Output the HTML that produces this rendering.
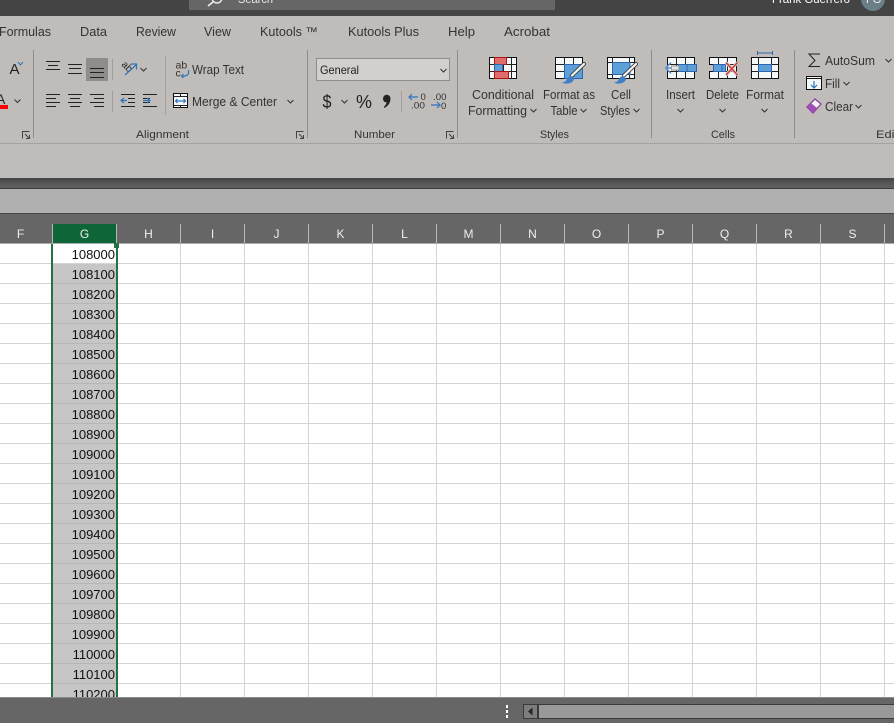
<!DOCTYPE html>
<html><head><meta charset="utf-8"><style>
html,body{margin:0;padding:0;width:894px;height:723px;overflow:hidden;background:#fff}
svg{display:block}
text{font-family:"Liberation Sans",sans-serif;font-size:12px;fill:#262626}
.n{font-size:13px;fill:#111;text-anchor:end}
.h{font-size:12px;fill:#eee;text-anchor:middle}
.g{fill:#333;font-size:11px}
.t{fill:#333;font-size:12.5px}
.l{stroke:#222;stroke-width:1;fill:none}
.b{stroke:#2e75c0;stroke-width:1.2;fill:none}
.k{fill:#f4f8f8;stroke:#111;stroke-width:1}
</style></head><body>
<svg width="894" height="723" viewBox="0 0 894 723" xmlns="http://www.w3.org/2000/svg">
<defs>
<path id="ch" d="M-3 -1.500L0 1.500L3 -1.500" fill="none" stroke="#333" stroke-width="1"/>
<path id="dl" d="M0 7V0H7M2.500 2.500L7 7M7 3.500V7H3.500" fill="none" stroke="#444" stroke-width="1"/>
<linearGradient id="sh" x1="0" y1="0" x2="0" y2="1"><stop offset="0" stop-color="#444"/><stop offset="0.5" stop-color="#565656"/><stop offset="1" stop-color="#606060"/></linearGradient>
<g id="brush">
<path d="M0 11.500L12 0" stroke="#444" stroke-width="4" stroke-linecap="round"/>
<path d="M0 11.500L12 0" stroke="#f6f6f6" stroke-width="2.200" stroke-linecap="round"/>
<path d="M-10 18.500Q-6 18 -5 15Q-3.500 12 -1 12L2 15Q1 19 -4 19.500Q-8 20 -10 18.500Z" fill="#3f7fc8"/>
</g>
</defs>
<!-- title bar -->
<rect x="0" y="0" width="894" height="16" fill="#444"/>
<rect x="189" y="0" width="366" height="10" fill="#666"/>
<circle cx="217" cy="-2" r="5" fill="none" stroke="#eee" stroke-width="1.400"/>
<path d="M213 2L208 6" stroke="#eee" stroke-width="1.600"/>
<text x="238" y="3" style="fill:#e8e8e8;font-size:12px" textLength="35" lengthAdjust="spacingAndGlyphs">Search</text>
<text x="772" y="3" style="fill:#fff;font-size:12px" textLength="78" lengthAdjust="spacingAndGlyphs">Frank Guerrero</text>
<circle cx="873" cy="-1" r="12" fill="#6b7f88"/>
<text x="866" y="3" style="fill:#eee;font-size:11px">FG</text>
<!-- ribbon -->
<rect x="0" y="16" width="894" height="162" fill="#c0bcb9"/>
<rect x="0" y="143" width="894" height="1" fill="#a5a2a0"/>
<text class="t" x="-1" y="36" textLength="52" lengthAdjust="spacingAndGlyphs">Formulas</text>
<text class="t" x="80" y="36" textLength="27" lengthAdjust="spacingAndGlyphs">Data</text>
<text class="t" x="136" y="36" textLength="40" lengthAdjust="spacingAndGlyphs">Review</text>
<text class="t" x="204" y="36" textLength="27" lengthAdjust="spacingAndGlyphs">View</text>
<text class="t" x="260" y="36" textLength="58" lengthAdjust="spacingAndGlyphs">Kutools ™</text>
<text class="t" x="348" y="36" textLength="71" lengthAdjust="spacingAndGlyphs">Kutools Plus</text>
<text class="t" x="448" y="36" textLength="27" lengthAdjust="spacingAndGlyphs">Help</text>
<text class="t" x="504" y="36" textLength="46" lengthAdjust="spacingAndGlyphs">Acrobat</text>
<!-- separators -->
<g stroke="#8f8c8a" stroke-width="1">
<path d="M33.500 50V138M307.500 50V138M457.500 50V138M651.500 50V138M794.500 50V138"/>
</g>
<g stroke="#a09d9b" stroke-width="1">
<path d="M112.500 59V80M112.500 91V112M165.500 56V115M401.500 91V112"/>
</g>
<!-- font bits -->
<text x="9.500" y="74" style="font-size:15px;fill:#222">A</text>
<path d="M18 62L20.500 65L23 62" fill="none" stroke="#2e75c0" stroke-width="1"/>
<text x="-4" y="104" style="font-size:14px;fill:#222">A</text>
<rect x="0" y="105" width="8" height="4" fill="#f00"/>
<use href="#ch" x="17.500" y="101"/>
<use href="#dl" x="22.500" y="131.500"/>
<!-- align top row -->
<rect x="86" y="58" width="22" height="23" fill="#8f8c8a"/>
<path class="l" d="M46 61.500H60M48 65.500H58M46 69.500H60M68 64.500H82M69 68.500H81M68 73.500H82M90 68.500H104M90 72.500H104M90 77.500H104"/>
<!-- align bottom row -->
<path class="l" d="M46 94.500H60M46 98.500H56M46 102.500H60M46 106.500H56M68 94.500H82M70 98.500H80M68 102.500H82M70 106.500H80M90 94.500H104M94 98.500H104M90 102.500H104M94 106.500H104"/>
<!-- indents -->
<path class="l" d="M121 94.500H135M128 98.500H135M128 102.500H135M121 106.500H135M143 94.500H157M143 98.500H150M143 102.500H150M143 106.500H157"/>
<path class="b" d="M127 100.500H121M124 98L121 100.500L124 103M143 100.500H150M147 98L150 100.500L147 103"/>
<!-- orientation -->
<text x="121" y="65" transform="rotate(45 121 65)" style="font-size:10px;fill:#222">ab</text>
<path class="b" d="M125 75L136 65M131 64H136.500V69.500"/>
<use href="#ch" x="143.500" y="69.500"/>
<!-- wrap text -->
<text x="175.500" y="68.500" style="font-size:10.500px;fill:#333">ab</text>
<text x="175.500" y="76.500" style="font-size:10.500px;fill:#333">c</text>
<path class="b" d="M188.500 70Q189.500 76 184 76H181.500M183.500 74L181.500 76L183.500 78"/>
<text x="192" y="74" class="t" textLength="52" lengthAdjust="spacingAndGlyphs">Wrap Text</text>
<!-- merge -->
<rect x="173.500" y="93.500" width="14" height="14" fill="#f4f8f8" stroke="#111"/>
<path d="M173.500 96.500H187.500M173.500 105.500H187.500M180.500 93.500V96.500M180.500 105.500V107.500" stroke="#222"/>
<path class="b" d="M175.500 101H185.500M177.500 99L175.500 101L177.500 103M183.500 99L185.500 101L183.500 103"/>
<text x="192" y="106" class="t" textLength="85" lengthAdjust="spacingAndGlyphs">Merge &amp; Center</text>
<use href="#ch" x="290.500" y="101.500"/>
<use href="#dl" x="296.500" y="131.500"/>
<text class="g" x="136" y="138" textLength="53" lengthAdjust="spacingAndGlyphs">Alignment</text>
<!-- number -->
<rect x="316.500" y="58.500" width="133" height="22" fill="#d2d0ce" stroke="#8f8c8a"/>
<text x="320" y="74" style="font-size:12px;fill:#222" textLength="39" lengthAdjust="spacingAndGlyphs">General</text>
<use href="#ch" x="443.500" y="70.500"/>
<text x="322.500" y="108" style="font-size:18px;fill:#222" textLength="9" lengthAdjust="spacingAndGlyphs">$</text>
<use href="#ch" x="344.500" y="101.500"/>
<text x="356" y="108" style="font-size:18px;fill:#222" textLength="16" lengthAdjust="spacingAndGlyphs">%</text>
<path d="M383 98.500A3.700 3.700 0 0 1 390.500 98.500Q390.500 104.500 384.500 108L383.800 107Q386.500 104.500 386.500 102.300Q383 102.300 383 98.500Z" fill="#222"/>
<text x="420.500" y="100" style="font-size:9.500px;fill:#333">0</text>
<text x="411" y="108.500" style="font-size:9.500px;fill:#333" textLength="14" lengthAdjust="spacingAndGlyphs">.00</text>
<path class="b" d="M409 97H418M412 94L409 97L412 100"/>
<text x="433" y="100" style="font-size:9.500px;fill:#333" textLength="13.500" lengthAdjust="spacingAndGlyphs">.00</text>
<text x="441" y="109" style="font-size:9.500px;fill:#333">0</text>
<path class="b" d="M431 105H440M437 102L440 105L437 108"/>
<use href="#dl" x="446.500" y="131.500"/>
<text class="g" x="354" y="138" textLength="41" lengthAdjust="spacingAndGlyphs">Number</text>
<!-- conditional formatting icon -->
<rect x="489.500" y="57.500" width="27" height="21" class="k"/>
<path d="M494.500 57.500V78.500M503.500 57.500V78.500M511.500 57.500V78.500M489.500 64.500H516.500M489.500 71.500H516.500" stroke="#222"/>
<rect x="494.500" y="57.500" width="12" height="7" fill="#e06c6c" stroke="#b01515"/>
<rect x="494.500" y="64.500" width="8" height="7" fill="#5da0d8" stroke="#2e64b0"/>
<rect x="494.500" y="71.500" width="14" height="7" fill="#e06c6c" stroke="#b01515"/>
<text x="472" y="99" class="t" textLength="62" lengthAdjust="spacingAndGlyphs">Conditional</text>
<text x="468" y="115" class="t" textLength="59" lengthAdjust="spacingAndGlyphs">Formatting</text>
<use href="#ch" x="533.500" y="110.500"/>
<!-- format as table -->
<rect x="555.500" y="57.500" width="27" height="21" class="k"/>
<path d="M564.500 57.500V78.500M573.500 57.500V78.500M555.500 64.500H582.500M555.500 71.500H582.500" stroke="#222"/>
<rect x="564.500" y="64.500" width="18" height="14" fill="#5da0d8" stroke="#2e64b0"/>
<use href="#brush" x="572" y="64"/>
<text x="543" y="99" class="t" textLength="52" lengthAdjust="spacingAndGlyphs">Format as</text>
<text x="550.500" y="115" class="t" textLength="27" lengthAdjust="spacingAndGlyphs">Table</text>
<use href="#ch" x="583.500" y="110.500"/>
<!-- cell styles -->
<rect x="607.500" y="57.500" width="27" height="21" class="k"/>
<path d="M612.500 57.500V78.500M607.500 62.500H634.500M607.500 74.500H634.500M629.500 57.500V78.500" stroke="#222"/>
<rect x="612.500" y="62.500" width="17.500" height="12" fill="#5da0d8" stroke="#2e64b0"/>
<use href="#brush" x="624" y="64"/>
<text x="611" y="99" class="t" textLength="20" lengthAdjust="spacingAndGlyphs">Cell</text>
<text x="600" y="115" class="t" textLength="30" lengthAdjust="spacingAndGlyphs">Styles</text>
<use href="#ch" x="636.500" y="110.500"/>
<text class="g" x="540" y="138" textLength="29" lengthAdjust="spacingAndGlyphs">Styles</text>
<!-- insert -->
<rect x="667.500" y="57.500" width="27" height="21" class="k"/>
<path d="M676.500 57.500V78.500M685.500 57.500V78.500M667.500 64.500H694.500M667.500 71.500H694.500" stroke="#222"/>
<rect x="678.500" y="64.500" width="18" height="7" fill="#5da0d8" stroke="#2e64b0"/>
<path d="M687 64.500V71.500" stroke="#2e64b0"/>
<path d="M671.500 66H679V70H671.500Z" fill="#e6e6e6" stroke="#999"/>
<path d="M671 62.500L665.800 68L671 73.500" fill="none" stroke="#5b8fd0" stroke-width="1.500"/>
<path d="M667 68H671" stroke="#5b8fd0" stroke-width="1.500"/>
<text x="666" y="99" class="t" textLength="29" lengthAdjust="spacingAndGlyphs">Insert</text>
<use href="#ch" x="680.500" y="110.500"/>
<!-- delete -->
<path class="k" d="M709.500 57.500H736.500V78.500H709.500V71.500H713.500V64.500H709.500Z"/>
<path d="M718.500 57.500V64.500M718.500 71.500V78.500M727.500 57.500V78.500M713.500 64.500H736.500M713.500 71.500H736.500" stroke="#222"/>
<rect x="713.500" y="64.500" width="12" height="7" fill="#5da0d8" stroke="#2e64b0"/>
<path d="M722 64.500V71.500" stroke="#2e64b0"/>
<path d="M726 62.500L737.500 75M737.500 62.500L726 75" stroke="#cfcfcf" stroke-width="3.200"/>
<path d="M726 62.500L737.500 75M737.500 62.500L726 75" stroke="#d9352a" stroke-width="1.300"/>
<text x="706" y="99" class="t" textLength="33" lengthAdjust="spacingAndGlyphs">Delete</text>
<use href="#ch" x="722.500" y="110.500"/>
<!-- format -->
<rect x="751.500" y="57.500" width="27" height="21" class="k"/>
<path d="M758.500 57.500V78.500M771.500 57.500V78.500M751.500 64.500H778.500M751.500 71.500H778.500" stroke="#222"/>
<rect x="758.500" y="64.500" width="13" height="7" fill="#5da0d8" stroke="#2e64b0"/>
<path d="M757.500 51V55M772.500 51V55M757.500 53H772.500" stroke="#2e64b0"/>
<text x="746" y="99" class="t" textLength="38" lengthAdjust="spacingAndGlyphs">Format</text>
<use href="#ch" x="764.500" y="110.500"/>
<text class="g" x="711" y="138" textLength="24" lengthAdjust="spacingAndGlyphs">Cells</text>
<!-- editing -->
<path d="M820 54H809L815 60.500L809 66.500H820" fill="none" stroke="#222" stroke-width="1"/>
<text x="825" y="65" class="t" textLength="50" lengthAdjust="spacingAndGlyphs">AutoSum</text>
<use href="#ch" x="888.500" y="60.500"/>
<rect x="806.500" y="76.500" width="15" height="13" fill="#f4f8f8" stroke="#111"/>
<path d="M806.500 78.500H821.500" stroke="#111"/>
<path class="b" d="M814 81V88M811 85L814 88L817 85"/>
<text x="825" y="88" class="t" textLength="15" lengthAdjust="spacingAndGlyphs">Fill</text>
<use href="#ch" x="846.500" y="83.500"/>
<path d="M807 107L815 99L821 104L813 113Z" fill="#f6f6f5" stroke="#8a3fa0" stroke-width="1.300"/>
<path d="M807 107L811 103L817 108L813 113Z" fill="#a04fb8"/>
<text x="825" y="111" class="t" textLength="28" lengthAdjust="spacingAndGlyphs">Clear</text>
<use href="#ch" x="858.500" y="106.500"/>
<text class="g" x="876" y="138" textLength="22" lengthAdjust="spacingAndGlyphs">Edit</text>
<!-- shadow + band -->
<rect x="0" y="178" width="894" height="10" fill="url(#sh)"/>
<rect x="0" y="188" width="894" height="1" fill="#3a3a3a"/>
<rect x="0" y="189" width="894" height="24" fill="#b0b0b0"/>
<rect x="0" y="213" width="894" height="1" fill="#444"/>
<rect x="0" y="214" width="894" height="29" fill="#666"/>
<rect x="0" y="243" width="894" height="1" fill="#aaa"/>
<!-- headers -->
<rect x="53" y="224" width="63" height="19" fill="#0e6537"/>
<g stroke="#b8b8b8" stroke-width="1">
<path d="M52.500 224V243M116.500 224V243M180.500 224V243M244.500 224V243M308.500 224V243M372.500 224V243M436.500 224V243M500.500 224V243M564.500 224V243M628.500 224V243M692.500 224V243M756.500 224V243M820.500 224V243M884.500 224V243"/>
</g>
<text class="h" x="20.500" y="238">F</text><text class="h" x="84.500" y="238">G</text><text class="h" x="148.500" y="238">H</text><text class="h" x="212.500" y="238">I</text><text class="h" x="276.500" y="238">J</text><text class="h" x="340.500" y="238">K</text><text class="h" x="404.500" y="238">L</text><text class="h" x="468.500" y="238">M</text><text class="h" x="532.500" y="238">N</text><text class="h" x="596.500" y="238">O</text><text class="h" x="660.500" y="238">P</text><text class="h" x="724.500" y="238">Q</text><text class="h" x="788.500" y="238">R</text><text class="h" x="852.500" y="238">S</text>
<!-- grid -->
<rect x="0" y="244" width="894" height="453" fill="#fff"/>
<rect x="53" y="264" width="63" height="433" fill="#c6c6c6"/>
<g stroke="#d4d4d4" stroke-width="1">
<path d="M180.500 244V697M244.500 244V697M308.500 244V697M372.500 244V697M436.500 244V697M500.500 244V697M564.500 244V697M628.500 244V697M692.500 244V697M756.500 244V697M820.500 244V697M884.500 244V697"/>
<path d="M0 263.500H894M0 283.500H894M0 303.500H894M0 323.500H894M0 343.500H894M0 363.500H894M0 383.500H894M0 403.500H894M0 423.500H894M0 443.500H894M0 463.500H894M0 483.500H894M0 503.500H894M0 523.500H894M0 543.500H894M0 563.500H894M0 583.500H894M0 603.500H894M0 623.500H894M0 643.500H894M0 663.500H894M0 683.500H894"/>
</g>
<g stroke="#b6b6b6" stroke-width="1">
<path d="M53 283.500H116M53 303.500H116M53 323.500H116M53 343.500H116M53 363.500H116M53 383.500H116M53 403.500H116M53 423.500H116M53 443.500H116M53 463.500H116M53 483.500H116M53 503.500H116M53 523.500H116M53 543.500H116M53 563.500H116M53 583.500H116M53 603.500H116M53 623.500H116M53 643.500H116M53 663.500H116M53 683.500H116"/>
</g>
<text class="n" x="115" y="259">108000</text><text class="n" x="115" y="279">108100</text><text class="n" x="115" y="299">108200</text><text class="n" x="115" y="319">108300</text><text class="n" x="115" y="339">108400</text><text class="n" x="115" y="359">108500</text><text class="n" x="115" y="379">108600</text><text class="n" x="115" y="399">108700</text><text class="n" x="115" y="419">108800</text><text class="n" x="115" y="439">108900</text><text class="n" x="115" y="459">109000</text><text class="n" x="115" y="479">109100</text><text class="n" x="115" y="499">109200</text><text class="n" x="115" y="519">109300</text><text class="n" x="115" y="539">109400</text><text class="n" x="115" y="559">109500</text><text class="n" x="115" y="579">109600</text><text class="n" x="115" y="599">109700</text><text class="n" x="115" y="619">109800</text><text class="n" x="115" y="639">109900</text><text class="n" x="115" y="659">110000</text><text class="n" x="115" y="679">110100</text><text class="n" x="115" y="699">110200</text>
<!-- selection -->
<rect x="51" y="244" width="2" height="453" fill="#217346"/>
<rect x="116" y="244" width="2" height="453" fill="#217346"/>
<rect x="114" y="243" width="5" height="5" fill="#217346"/>
<!-- bottom bar -->
<rect x="0" y="697" width="894" height="26" fill="#666"/>
<rect x="0" y="697" width="894" height="1" fill="#8a8a8a"/>
<rect x="506" y="705" width="2" height="3" fill="#fff"/><rect x="506" y="710" width="2" height="3" fill="#fff"/><rect x="506" y="715" width="2" height="3" fill="#fff"/>
<rect x="523.500" y="704.500" width="371" height="14" fill="#999" stroke="#3a3a3a"/>
<rect x="524" y="705" width="13" height="13" fill="#7d7d7d"/>
<rect x="537" y="704" width="2" height="15" fill="#3a3a3a"/>
<path d="M528 711.500L532.500 707.500V715.500Z" fill="#222"/>
</svg>
</body></html>
